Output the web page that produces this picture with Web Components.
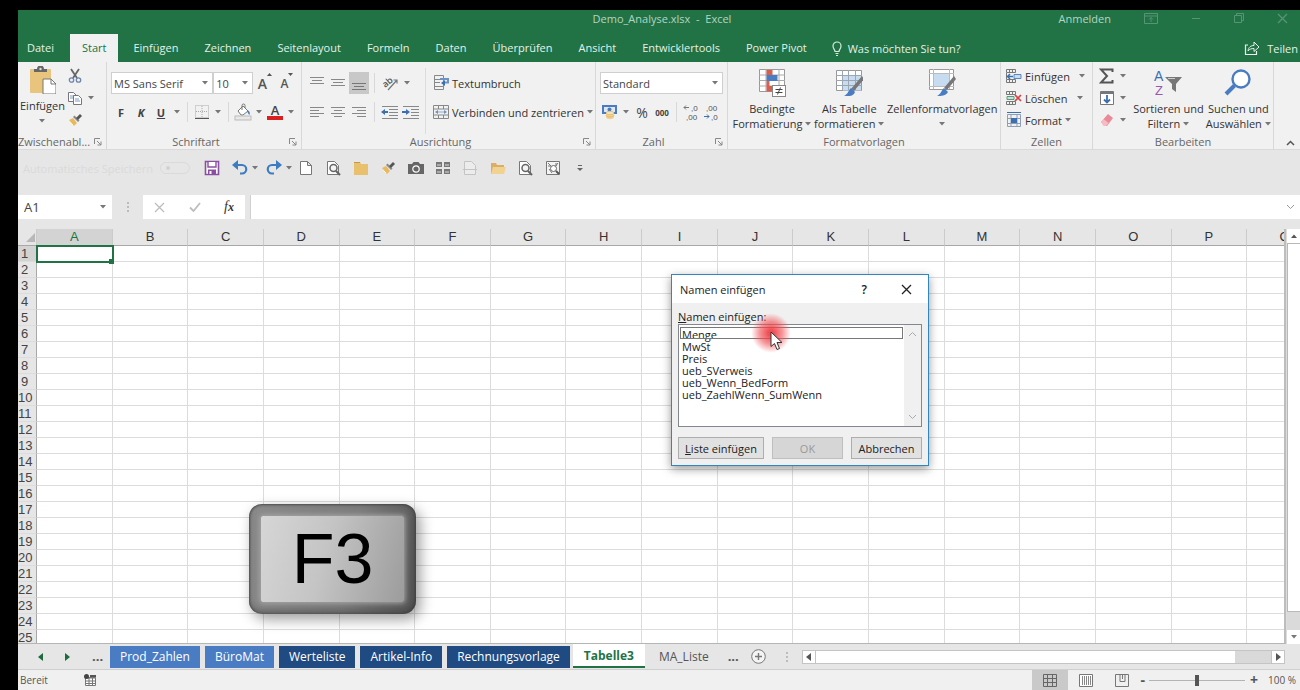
<!DOCTYPE html>
<html lang="de">
<head>
<meta charset="utf-8">
<title>Demo_Analyse.xlsx - Excel</title>
<style>
html,body{margin:0;height:100%;background:#000}
body{font:11px/15px "Open Sans","Noto Sans",sans-serif;color:#444;overflow:hidden}
</style>
</head>
<body>
<excel-app></excel-app>
<script>
const ICONS={
paste:[28,28,'<rect x="2" y="3" width="21" height="24" rx="1" fill="#e9c47c"/><path d="M6 6V3h3a3.500 3.500 0 0 1 7 0h3v3z" fill="#666"/><circle cx="12.500" cy="3" r="1.200" fill="#ddd"/><path d="M15 13h8l5 5v10H15z" fill="#fff" stroke="#777"/><path d="M23 13v5h5" fill="none" stroke="#777"/>'],
cut:[16,16,'<path d="M4 1l6 9M12 1L6 10" stroke="#666" stroke-width="1.800" fill="none"/><circle cx="4.500" cy="12" r="2.200" fill="none" stroke="#6c86ad" stroke-width="1.300"/><circle cx="11.500" cy="12" r="2.200" fill="none" stroke="#6c86ad" stroke-width="1.300"/>'],
copy:[16,16,'<path d="M1.500 2.500h5l3 3v6h-8z" fill="#fff" stroke="#777"/><path d="M3 6h4M3 8h4" stroke="#7b9bc8"/><path d="M6.500 5.500h5l3 3v6h-8z" fill="#fff" stroke="#777"/><path d="M8 9h4M8 11h5" stroke="#7b9bc8"/>'],
brush:[16,16,'<path d="M2 8l5 6 3-3-4-5z" fill="#e9b95f"/><path d="M6 5l5 5 1.500-1.500-5-5z" fill="#888"/><path d="M9 6l4-4 2 2-4 4z" fill="#555"/><path d="M3 10l3 3" stroke="#fff3d8"/>'],
triUp:[5,10,'<path d="M0 4h5L2.500 1z" fill="#555"/>'],
triDown:[5,10,'<path d="M0 1h5L2.500 4z" fill="#555"/>'],
alT:[16,16,'<path d="M1 2.500h14M3 5.500h10M1 8.500h14" stroke="#888"/>'],
alM:[16,16,'<path d="M1 4.500h14M3 7.500h10M1 10.500h14" stroke="#888"/>'],
alB:[16,16,'<path d="M1 8.500h14M3 11.500h10M1 14.500h14" stroke="#777"/>'],
left:[16,16,'<path d="M1 3.500h14M1 6.500h9M1 9.500h14M1 12.500h9" stroke="#888"/>'],
center:[16,16,'<path d="M1 3.500h14M4 6.500h8M1 9.500h14M4 12.500h8" stroke="#888"/>'],
right:[16,16,'<path d="M1 3.500h14M6 6.500h9M1 9.500h14M6 12.500h9" stroke="#888"/>'],
rotate:[18,16,'<text x="2" y="11" font-size="9" font-weight="600" fill="#555" transform="rotate(-40 6 9)" font-family="Open Sans">ab</text><path d="M7 15l9-10M16 8.500V5h-3.500" stroke="#777" fill="none" stroke-width="1.200"/>'],
outdent:[18,16,'<path d="M1 2.500h16M8 5.500h9M8 8.500h9M8 11.500h9M1 14.500h16" stroke="#888"/><path d="M7 8H3" stroke="#3c6fb0" stroke-width="2"/><path d="M4 5v6L0 8z" fill="#3c6fb0"/>'],
indent:[18,16,'<path d="M1 2.500h16M9 5.500h8M9 8.500h8M9 11.500h8M1 14.500h16" stroke="#888"/><path d="M0 8h4" stroke="#3c6fb0" stroke-width="2"/><path d="M4 5v6l4-3z" fill="#3c6fb0"/>'],
borders:[16,16,'<path d="M1.500 1.500h13v12h-13zM8 2v11M2 7.500h12" fill="none" stroke="#aaa" stroke-dasharray="1 1"/><path d="M1 14.500h14" stroke="#555"/>'],
bucket:[18,18,'<path d="M4 8l5-5 5 5-5 4H7z" fill="#fff" stroke="#777"/><path d="M8 7V2.500a1.500 1.500 0 0 1 3 0V5" fill="none" stroke="#777"/><path d="M13 7c3 1 3 3 2.500 5-1.500-1-2-3-2.500-5z" fill="#4a7cc2"/><rect x="1" y="13" width="16" height="4" fill="#e8e8e8" stroke="#bbb"/>'],
wrap:[16,16,'<path d="M1.500.500h9v14h-9zM2 4.500h8M2 7.500h5M2 11.500h8" fill="none" stroke="#888"/><path d="M7 4h8v3.500h-4" fill="none" stroke="#6d93c4" stroke-width="2"/><path d="M12 5v6L8 8z" fill="#3c6fb0"/>'],
merge:[16,16,'<path d="M.500 1.500h15v13H.500zM.500 5h15M.500 11h15M5.500 1.500V5M10.500 1.500V5M5.500 11v3.500M10.500 11v3.500" fill="none" stroke="#888"/><path d="M3 8h10" stroke="#8fa9cc"/><path d="M5 6v4L2 8zM11 6v4l3-2z" fill="#6d93c4"/>'],
currency:[18,18,'<rect x="1" y="2" width="15" height="9" fill="#4a7cc2"/><rect x="3" y="4" width="11" height="5" fill="#dce8f5"/><circle cx="8.500" cy="6.500" r="2" fill="#4a7cc2"/><path d="M5 10v4c0 3 8 3 8 0v-4z" fill="#f2d293"/><ellipse cx="9" cy="10" rx="4" ry="1.700" fill="#f8e2b4" stroke="#d9b063" stroke-width=".600"/><path d="M5 12.500c1 2 7 2 8 0" fill="none" stroke="#d9b063" stroke-width=".800"/>'],
cond:[28,30,'<path d="M1.500 1.500h25v22h-25z" fill="#fff" stroke="#999"/><path d="M1 7h26M1 12.500h26M1 18h26M8 1v22M21 1v22" stroke="#aaa"/><path d="M8.500 2h6v5h-6zM8.500 13h3v5h-3zM8.500 18h6v5.500h-6z" fill="#d5604f"/><path d="M8.500 7h11v6h-11z" fill="#4a7cc2"/><rect x="14.500" y="17.500" width="13" height="11" fill="#fff" stroke="#888"/><path d="M17.500 21.500h7M17.500 24.500h7M22.500 19.500l-3 7" stroke="#444"/>'],
table:[28,30,'<path d="M1.500 2.500h25v20h-25z" fill="#fff" stroke="#999"/><path d="M8 7.500h18v15H8z" fill="#c7dcf0"/><path d="M1 7.500h26M1 12.500h26M1 17.500h26M7.500 2v20M13.500 2v20M20.500 2v20" stroke="#9aa6b3"/><path d="M27 8l2 3-10 12-3-2z" fill="#777"/><path d="M16 20l4 4c-2 5-7 4-11 4 4-2 4-5 7-8z" fill="#4a7cc2"/>'],
style:[28,30,'<path d="M1.500 1.500h24v20h-24z" fill="#fff" stroke="#999"/><path d="M1 5.500h25M1 18.500h25M5.500 1v20M21.500 1v20" stroke="#bbb"/><rect x="6" y="6" width="15" height="12" fill="#c7dcf0"/><path d="M26 8l2 3-9 11-3-2z" fill="#777"/><path d="M16 20l4 4c-2 4-7 4-11 4 4-2 4-5 7-8z" fill="#4a7cc2"/>'],
cins:[16,16,'<path d="M.500 1.500h9v3h-9zM.500 11.500h9v3h-9zM3.500 1v3M6.500 1v3M3.500 12v3M6.500 12v3M.500 5v6" fill="none" stroke="#777"/><path d="M8 6.500h7v4H8z" fill="#c7dcf0" stroke="#5c87bd"/><path d="M7 8.500H2M4 6L1.500 8.500 4 11" stroke="#3c6fb0" fill="none" stroke-width="1.500"/>'],
cdel:[16,16,'<path d="M.500 1.500h9v3h-9zM.500 11.500h9v3h-9zM3.500 1v3M6.500 1v3M3.500 12v3M6.500 12v3" fill="none" stroke="#777"/><path d="M1 6.500h7v3H1z" fill="#c7dcf0" stroke="#5c9a6a"/><path d="M9 5l6 6M15 5l-6 6" stroke="#d8434a" stroke-width="1.700"/>'],
cfmt:[16,16,'<path d="M1.500 2.500h13v12h-13zM1 6.500h14M1 11.500h14M5 3v11M11 3v11" fill="none" stroke="#8f9fb3"/><rect x="5" y="6" width="6" height="5" fill="#3c6fb0"/><path d="M1 .500h14" stroke="#3c6fb0"/>'],
sum:[16,16,'<path d="M13.500 4V1.500H2l6 6.500-6 6.500h11.500V12" fill="none" stroke="#555" stroke-width="2"/>'],
fill:[16,16,'<path d="M1.500 1.500h13v13h-13z" fill="#fff" stroke="#777"/><path d="M1 3h14" stroke="#777" stroke-width="2"/><path d="M8 5v7M5 9.500L8 12.500l3-3" stroke="#3c6fb0" fill="none" stroke-width="1.800"/>'],
erase:[16,16,'<path d="M2 10l7-8 5 4-6 8H5z" fill="#e98a98"/><path d="M2 10l2.500-3 5 4L7 14H5z" fill="#f6bcc4"/>'],
sort:[30,30,'<text x="1" y="13" font-size="14" font-family="Liberation Sans" fill="#3c6fb0">A</text><text x="2" y="27" font-size="13" font-family="Liberation Sans" fill="#9a57b0">Z</text><path d="M12 9h17l-6 7v8l-4-3v-5z" fill="#777"/><path d="M15 10.500h7" stroke="#ccc"/>'],
find:[28,28,'<circle cx="17" cy="10" r="8.500" fill="#fff" stroke="#4a7cc2" stroke-width="2.400"/><path d="M10.500 16.500L2 25" stroke="#4a7cc2" stroke-width="4"/>'],
launch:[8,8,'<path d="M.500 6V.500H6M3 3l4 4M7 3.500V7H3.500" fill="none" stroke="#888"/>'],
up:[9,6,'<path d="M1 5l3.500-3.500L8 5" fill="none" stroke="#555" stroke-width="1.500"/>'],
drop:[6,4,'<path d="M0 0h6L3 3.500z" fill="#777"/>'],
dropUp:[6,4,'<path d="M0 4h6L3 .500z" fill="#555"/>'],
dleft:[5,8,'<path d="M5 0v8L0 4z" fill="currentColor"/>'],
dright:[5,8,'<path d="M0 0v8l5-4z" fill="currentColor"/>'],
save:[16,16,'<path d="M2 1.500h12.500v13H1.500v-13z" fill="#fff" stroke="#8a4fa3" stroke-width="1.600"/><path d="M4 2v5h8V2" fill="#fff" stroke="#8a4fa3" stroke-width="1.400"/><path d="M4 9.500h8v5H4z" fill="#8a4fa3"/><path d="M5.500 11h2v3h-2z" fill="#fff"/>'],
undo:[16,16,'<path d="M2 5h8a3.800 3.800 0 0 1 0 8.500H8" fill="none" stroke="#3c7cc0" stroke-width="2.200"/><path d="M6 0v10L0 5z" fill="#3c7cc0"/>'],
redo:[16,16,'<path d="M14 5H6a3.800 3.800 0 0 0 0 8.500h2" fill="none" stroke="#3c7cc0" stroke-width="2.200"/><path d="M10 0v10l6-5z" fill="#3c7cc0"/>'],
page:[16,16,'<path d="M2.500 1.500h7l4 4v9h-11zM9.500 1.500v4h4" fill="#fff" stroke="#777"/>'],
preview:[16,16,'<path d="M2.500 1.500h7l4 4v9h-11z" fill="#fff" stroke="#777"/><circle cx="8.500" cy="8" r="3.500" fill="#f4f4f4" stroke="#666" stroke-width="1.500"/><path d="M11 11l4 4" stroke="#666" stroke-width="2.200"/>'],
folder:[16,16,'<path d="M1 2h6l1 2h7v11H1z" fill="#e9c06c"/><path d="M1 2h6v1H1z" fill="#c59a45"/>'],
camera:[16,16,'<path d="M0 4h4l1.500-2h5L12 4h4v10H0z" fill="#666"/><circle cx="8" cy="9" r="3.200" fill="#666" stroke="#fff" stroke-width="1.200"/>'],
views:[16,16,'<path d="M1 2h6v5H1zM9 2h6v5H9zM1 9h6v5H1zM9 9h6v5H9z" fill="#777"/><path d="M2 5h4M10 5h4M2 12h4M10 12h4" stroke="#ddd"/>'],
faded:[16,16,'<path d="M2.500 1.500h7l4 4v9h-11zM1 9.500h14" fill="#ececec" stroke="#c4c4c4"/>'],
open:[16,16,'<path d="M1 3h5l1 2h7v9H1z" fill="#d9b063"/><path d="M3 7h13l-2 7H1z" fill="#f2d291"/>'],
screen:[16,16,'<path d="M1.500 1.500h13v13h-13z" fill="#f4f4f4" stroke="#777"/><path d="M3 3l5 5M4 9l3 4M13 3l-3 4M3 6h3M11 3v3" stroke="#777"/><circle cx="8.500" cy="8.500" r="3" fill="#fff" stroke="#666"/><path d="M11 11l3 3" stroke="#555" stroke-width="2"/>'],
more:[8,8,'<path d="M2 1.500h4" stroke="#666"/><path d="M1 4h6L4 7z" fill="#666"/>'],
bulb:[10,15,'<path d="M3 10.500C3 8.500 1 8 1 5a4 4 0 0 1 8 0c0 3-2 3.500-2 5.500zM3.500 12.500h3M4 14.500h2" fill="none" stroke="#d9ebdf" stroke-width="1.200"/>'],
share:[16,14,'<path d="M4 4H1.500v9.500h11V10" fill="none" stroke="#e8f3ec" stroke-width="1.200"/><path d="M4 10c.500-4 3-5.500 6-5.500V1l5 5-5 4.500V7.500C7.500 7.500 5.500 8 4 10z" fill="none" stroke="#e8f3ec"/>'],
ribbonopt:[14,11,'<path d="M.500.500h13v10H.500zM.500 3h13M7 9V4.500M5 6.500l2-2 2 2" fill="none" stroke="currentColor"/>'],
min:[10,10,'<path d="M1 5.500h8" stroke="currentColor"/>'],
restore:[10,10,'<path d="M.500 2.500h7v7h-7zM2.500 2.500v-2h7v7h-2" fill="none" stroke="currentColor"/>'],
close:[11,11,'<path d="M1 1l9 9M10 1l-9 9" fill="none" stroke="currentColor" stroke-width="1.300"/>'],
check:[12,10,'<path d="M1 5.500L4.500 9 11 1" fill="none" stroke="currentColor" stroke-width="1.800"/>'],
chevD:[9,6,'<path d="M1 1l3.500 3.500L8 1" fill="none" stroke="currentColor"/>'],
chevU:[9,6,'<path d="M1 5l3.500-3.500L8 5" fill="none" stroke="currentColor"/>'],
plus:[15,15,'<circle cx="7.500" cy="7.500" r="6.800" fill="#f4f4f4" stroke="#777"/><path d="M4 7.500h7M7.500 4v7" stroke="#777" stroke-width="1.400"/>'],
dots:[2,12,'<path d="M0 1h2v2H0zM0 5h2v2H0zM0 9h2v2H0z" fill="#bcbcbc"/>'],
corner:[9,9,'<path d="M9 0v9H0z" fill="#b8b8b8"/>'],
macro:[13,12,'<path d="M1.500 3.500h10v8h-10z" fill="#fff" stroke="#777"/><path d="M1 4h11M1 7h11M1 9.500h11M5 4v8M8.500 4v8" stroke="#777"/><circle cx="2.500" cy="2.500" r="2.500" fill="#444"/><path d="M6 1h6v2H6z" fill="#555"/>'],
vnorm:[14,13,'<path d="M.500.500h13v12H.500zM.500 4.500h13M.500 8.500h13M4.500.500v12M9.500.500v12" fill="none" stroke="#666"/>'],
vpage:[14,13,'<path d="M.500.500h13v12H.500z" fill="#fff" stroke="#777"/><path d="M3.500 2v9M5.500 2v9M7.500 2v9M9.500 2v9M11.500 2v9" stroke="#888"/>'],
vbreak:[14,13,'<path d="M.500.500h13v12H.500zM5 .500v7h5v-7M7.500 1v4" fill="none" stroke="#777"/>'],
dec1:[16,18,'<path d="M1 4.500h5M3 2.500L1 4.500l2 2" fill="none" stroke="#777"/><text x="8" y="8" font-size="8" fill="#555" font-family="Liberation Sans">,0</text><text x="3" y="17" font-size="8" fill="#555" font-family="Liberation Sans">,00</text>'],
dec2:[16,18,'<text x="3" y="8" font-size="8" fill="#555" font-family="Liberation Sans">,00</text><path d="M1 13.500h5M4 11.500l2 2-2 2" fill="none" stroke="#3c6fb0"/><text x="8" y="17" font-size="8" fill="#555" font-family="Liberation Sans">,0</text>'],
pointer:[14,20,'<path d="M1 1v14.500l3.500-3 2.500 6 2.500-1-2.500-6H12z" fill="#fff" stroke="#333"/>']
};
const define=(name,html,setup)=>{
  const t=document.createElement('template');
  t.innerHTML=`<style>*{box-sizing:border-box}button,select,input{font:inherit;color:inherit;margin:0;padding:0;border:0;background:none}button{line-height:inherit}</style>`+html;
  customElements.define(name,class extends HTMLElement{
    constructor(){super();this.attachShadow({mode:'open'}).append(t.content.cloneNode(true))}
    connectedCallback(){if(setup&&!this.done){this.done=true;setup(this,this.shadowRoot)}}
  });
};

define('x-icon','<style>:host{display:block;flex:none}svg{display:block}</style><div></div>',(h,r)=>{
  const [w,t,p]=ICONS[h.getAttribute('name')];
  r.querySelector('div').innerHTML=`<svg aria-hidden="true" width="${w}" height="${t}" viewBox="0 0 ${w} ${t}">${p}</svg>`;
});

/* Small ribbon button: a slot for text or an icon. */
define('tool-button',`<style>
:host{display:block;flex:none}
button{display:flex;align-items:center;justify-content:center;width:20px;height:22px;font-size:11px}
:host([drop]) button{width:12px}
:host([text]) button{width:auto;gap:3px;white-space:nowrap}
:host([on]) button{background:#c8c8c8}
</style><button><slot></slot></button>`,(h,r)=>{
  if(!h.hasAttribute('text'))r.querySelector('button').setAttribute('aria-label',h.getAttribute('label')||'Menü');
  if(h.hasAttribute('drop'))h.innerHTML='<x-icon name="drop"></x-icon>';
});

/* Tall ribbon button: picture above two lines of caption. */
define('ribbon-big',`<style>
:host{display:block;flex:none}
button{display:flex;flex-direction:column;align-items:center;height:68px;line-height:15px;white-space:nowrap;color:#333}
.pic{height:36px;display:flex;align-items:center}
.b{display:flex;align-items:center;gap:3px;height:15px}
</style><button><span class="pic"><slot name="icon"></slot></span><span><slot></slot></span><span class="b"><slot name="second"></slot><x-icon name="drop"></x-icon></span></button>`);

define('ribbon-group',`<style>
:host{display:flex;flex-direction:column;border-right:1px solid #d8d8d8;min-width:0}
.body{flex:1;min-height:0}
.foot{display:grid;grid-template-columns:1fr auto 1fr;align-items:center;height:17px;padding-bottom:2px;color:#666;white-space:nowrap}
:host([launch]) .foot{grid-template-columns:1fr auto 1fr 16px}
.foot x-icon{grid-column:4;justify-self:start;margin-left:4px}
:host([start]) .foot{grid-template-columns:0 auto 1fr 16px}
.t{grid-column:2}
</style><div class="body"><slot></slot></div><div class="foot"><span class="t"></span></div>`,(h,r)=>{
  r.querySelector('.t').textContent=h.getAttribute('label');
  if(h.hasAttribute('launch'))r.querySelector('.foot').insertAdjacentHTML('beforeend','<x-icon name="launch"></x-icon>');
});

define('combo-box',`<style>
:host{display:block;height:22px}
label{display:grid;height:22px;background:#fff;border:1px solid #cfcfcf;align-items:center}
select,x-icon{grid-area:1/1}
select{appearance:none;width:100%;height:20px;padding-left:2px;color:#444}
x-icon{justify-self:end;margin-right:4px;pointer-events:none}
</style><label><select><option></option></select><x-icon name="drop"></x-icon></label>`,(h,r)=>{
  r.querySelector('option').textContent=h.getAttribute('value');
  r.querySelector('select').setAttribute('aria-label',h.getAttribute('label'));
});

define('title-bar',`<style>
:host{display:grid;grid-template-columns:1fr auto 1fr;align-items:center;height:24px;padding:0 12px 8px 18px;color:#b5d3c1;background:#217346}
.r{display:flex;justify-content:flex-end;align-items:center;gap:33px;grid-column:3;color:#579474}
a{color:#b5d3c1;text-decoration:none}.t{grid-column:2;white-space:pre}
button{display:block}
</style><span class="t">Demo_Analyse.xlsx  -  Excel</span>
<div class="r"><a href="#">Anmelden</a><button aria-label="Menübandoptionen"><x-icon name="ribbonopt"></x-icon></button><button aria-label="Minimieren"><x-icon name="min"></x-icon></button><button aria-label="Verkleinern"><x-icon name="restore"></x-icon></button><button aria-label="Schließen"><x-icon name="close"></x-icon></button></div>`);

define('ribbon-tabs',`<style>
:host{display:flex;align-items:stretch;height:28px;background:#217346;color:#e4f1e9}
a{color:inherit;text-decoration:none;padding:0 13px;line-height:28px;white-space:nowrap}
a:first-of-type{padding:0 16px 0 9px}
a.on{background:#f1f1f1;color:#217346;padding:0 12px;margin-right:2px}
.ask,.share{display:flex;align-items:center;gap:6px;white-space:nowrap}
.ask{margin-left:12px}.share{margin-left:auto;padding-right:2px;gap:7px}
</style><a href="#">Datei</a><a href="#" class="on">Start</a><a href="#">Einfügen</a><a href="#">Zeichnen</a><a href="#">Seitenlayout</a><a href="#">Formeln</a><a href="#">Daten</a><a href="#">Überprüfen</a><a href="#">Ansicht</a><a href="#">Entwicklertools</a><a href="#">Power Pivot</a><button class="ask"><x-icon name="bulb"></x-icon>Was möchten Sie tun?</button><button class="share"><x-icon name="share"></x-icon>Teilen</button>`);

define('ribbon-bar',`<style>
:host{display:grid;grid-template-columns:89fr 195fr 294fr 132fr 273fr 92fr 181fr 26fr;height:88px;background:#f1f1f1;border-bottom:1px solid #dadada}
.row{display:flex;align-items:center;height:22px}
.rows{display:flex;flex-direction:column;gap:7px;padding:10px 4px 0}
.al{padding-left:5px}.al .row{gap:1px}
.stack{display:flex;flex-direction:column;padding-top:3px}
.flex{display:flex}
.bigs{display:flex;justify-content:space-evenly;padding:3px 0 0 2px}
.sep{flex:none;width:1px;height:20px;margin:0 4px;background:#d8d8d8}
.vsep{flex:none;width:1px;height:66px;margin-top:6px;background:#dcdcdc}
.dark{color:#333}
.col{display:flex;flex-direction:column;gap:7px;padding:10px 0 0 7px}
b{color:#444}.A{border-bottom:4px solid #d8201f;line-height:12px;font-size:13px;font-weight:600;padding:0 4px}
.f1{font-size:14px;font-weight:600;color:#555}.f2{font-size:12px;font-weight:600;color:#555}
.pct{font-size:14px}.th{font-size:8px}
.gr{margin-left:2px}
.raise{align-self:flex-start}
.end{display:flex;align-items:flex-end;justify-content:center;padding:0 0 5px 6px}
.clip{padding-left:2px}.cells{padding-left:5px}.edit{padding-left:4px}
.gap{width:6px}.wide{flex:1}.font{width:105px}.size{width:41px}
</style>
<ribbon-group label="Zwischenabl..." launch start><div class="flex clip">
 <ribbon-big><x-icon slot="icon" name="paste"></x-icon>Einfügen</ribbon-big>
 <div class="stack">
  <div class="row"><tool-button label="Ausschneiden"><x-icon name="cut"></x-icon></tool-button></div>
  <div class="row"><tool-button label="Kopieren"><x-icon name="copy"></x-icon></tool-button><tool-button drop></tool-button></div>
  <div class="row"><tool-button label="Format übertragen"><x-icon name="brush"></x-icon></tool-button></div></div></div>
</ribbon-group>
<ribbon-group label="Schriftart" launch><div class="rows">
 <div class="row"><combo-box class="font" label="Schriftart" value="MS Sans Serif"></combo-box><combo-box class="size" label="Schriftgrad" value="10"></combo-box>
  <tool-button class="gr" label="Schrift vergrößern"><span class="f1">A</span><x-icon class="raise" name="triUp"></x-icon></tool-button><tool-button class="gr" label="Schrift verkleinern"><span class="f2">A</span><x-icon class="raise" name="triDown"></x-icon></tool-button></div>
 <div class="row"><tool-button label="Fett"><b>F</b></tool-button><tool-button label="Kursiv"><b><i>K</i></b></tool-button><tool-button label="Unterstrichen"><b><u>U</u></b></tool-button><tool-button drop></tool-button><span class="sep"></span>
  <tool-button label="Rahmen"><x-icon name="borders"></x-icon></tool-button><tool-button drop></tool-button><span class="sep"></span>
  <tool-button label="Füllfarbe"><x-icon name="bucket"></x-icon></tool-button><tool-button drop></tool-button><tool-button label="Schriftfarbe"><span class="A">A</span></tool-button><tool-button drop></tool-button></div></div>
</ribbon-group>
<ribbon-group label="Ausrichtung" launch><div class="flex">
 <div class="rows al"><div class="row"><tool-button label="Oben"><x-icon name="alT"></x-icon></tool-button><tool-button label="Mitte"><x-icon name="alM"></x-icon></tool-button><tool-button on label="Unten"><x-icon name="alB"></x-icon></tool-button><span class="sep"></span><tool-button label="Ausrichtung"><x-icon name="rotate"></x-icon></tool-button><tool-button drop></tool-button></div>
 <div class="row"><tool-button label="Linksbündig"><x-icon name="left"></x-icon></tool-button><tool-button label="Zentriert"><x-icon name="center"></x-icon></tool-button><tool-button label="Rechtsbündig"><x-icon name="right"></x-icon></tool-button><span class="sep"></span><tool-button label="Einzug verkleinern"><x-icon name="outdent"></x-icon></tool-button><tool-button label="Einzug vergrößern"><x-icon name="indent"></x-icon></tool-button></div></div>
 <span class="vsep"></span>
 <div class="col dark"><div class="row"><tool-button text><x-icon name="wrap"></x-icon>Textumbruch</tool-button></div>
 <div class="row"><tool-button text><x-icon name="merge"></x-icon>Verbinden und zentrieren</tool-button><tool-button drop></tool-button></div></div></div>
</ribbon-group>
<ribbon-group label="Zahl" launch><div class="rows">
 <div class="row"><combo-box class="wide" label="Zahlenformat" value="Standard"></combo-box></div>
 <div class="row"><tool-button label="Währung"><x-icon name="currency"></x-icon></tool-button><tool-button drop></tool-button><tool-button label="Prozent"><span class="pct">%</span></tool-button><tool-button label="Tausender"><b class="th">000</b></tool-button><span class="sep"></span><tool-button label="Mehr Stellen"><x-icon name="dec1"></x-icon></tool-button><tool-button label="Weniger Stellen"><x-icon name="dec2"></x-icon></tool-button></div></div>
</ribbon-group>
<ribbon-group label="Formatvorlagen"><div class="bigs">
 <ribbon-big><x-icon slot="icon" name="cond"></x-icon>Bedingte<span slot="second">Formatierung</span></ribbon-big>
 <ribbon-big><x-icon slot="icon" name="table"></x-icon>Als Tabelle<span slot="second">formatieren</span></ribbon-big>
 <ribbon-big><x-icon slot="icon" name="style"></x-icon>Zellenformatvorlagen</ribbon-big></div>
</ribbon-group>
<ribbon-group label="Zellen"><div class="stack dark cells">
 <div class="row"><tool-button text><x-icon name="cins"></x-icon>Einfügen</tool-button><span class="gap"></span><tool-button drop></tool-button></div>
 <div class="row"><tool-button text><x-icon name="cdel"></x-icon>Löschen</tool-button><span class="gap"></span><tool-button drop></tool-button></div>
 <div class="row"><tool-button text><x-icon name="cfmt"></x-icon>Format</tool-button><tool-button drop></tool-button></div></div>
</ribbon-group>
<ribbon-group label="Bearbeiten"><div class="flex edit">
 <div class="stack"><div class="row"><tool-button label="Summe"><x-icon name="sum"></x-icon></tool-button><tool-button drop></tool-button></div>
 <div class="row"><tool-button label="Füllbereich"><x-icon name="fill"></x-icon></tool-button><tool-button drop></tool-button></div>
 <div class="row"><tool-button label="Löschen"><x-icon name="erase"></x-icon></tool-button><tool-button drop></tool-button></div></div>
 <div class="bigs wide"><ribbon-big><x-icon slot="icon" name="sort"></x-icon>Sortieren und<span slot="second">Filtern</span></ribbon-big>
 <ribbon-big><x-icon slot="icon" name="find"></x-icon>Suchen und<span slot="second">Auswählen</span></ribbon-big></div></div>
</ribbon-group>
<div class="end"><button aria-label="Menüband reduzieren"><x-icon name="up"></x-icon></button></div>`);

define('quick-access',`<style>
:host{display:flex;align-items:center;height:36px;padding-left:5px;color:#dadada;background:#e6e6e6}
.auto{width:130px;white-space:nowrap}
.sw{width:30px;height:12px;margin:0 14px 0 7px;border:1px solid #dadada;border-radius:6px;display:block;padding:3px 5px}
.sw::before{content:"";display:block;width:4px;height:4px;border-radius:2px;background:#d2d2d2}
button{display:flex;align-items:center;justify-content:center;width:16px;height:20px}
.d{width:12px;margin:0 3px 0 1px}
.g{width:12px}.h{width:2px}
.set{display:flex;justify-content:space-between;width:290px}
</style><span class="auto">Automatisches Speichern</span><span class="sw"></span>
<button aria-label="Speichern"><x-icon name="save"></x-icon></button><span class="g"></span>
<button aria-label="Rückgängig"><x-icon name="undo"></x-icon></button><button class="d" aria-label="Mehr"><x-icon name="drop"></x-icon></button><span class="h"></span>
<button aria-label="Wiederholen"><x-icon name="redo"></x-icon></button><button class="d" aria-label="Mehr"><x-icon name="drop"></x-icon></button>
<span class="set"></span>`,(h,r)=>{
  r.querySelector('.set').innerHTML='page preview folder brush camera views faded open preview screen more'.split(' ').map(n=>`<button aria-label="${n}"><x-icon name="${n}"></x-icon></button>`).join('');
});

define('formula-bar',`<style>
:host{display:flex;align-items:stretch;height:43px;padding:9px 0 10px;background:#e6e6e6;color:#444}
.name{width:94px;display:flex;align-items:center;background:#fff;padding:0 6px}
.name input{width:76px;font-size:13px}
.dots{width:31px;display:flex;align-items:center;justify-content:center}
.btns{display:flex;align-items:center;width:102px;justify-content:space-between;padding:0 11px;background:#fff;color:#bdbdbd;margin-right:5px}
.fx{font:italic 14px/20px "Liberation Serif",serif;color:#333}
.fx span{font-size:12px;font-weight:700}
.f{flex:1;display:flex;align-items:center;background:#fff;border-left:1px solid #d0d0d0;padding-right:5px;color:#999}
.f input{flex:1;height:20px;outline:0}
</style><div class="name"><input aria-label="Namenfeld" value="A1"><x-icon name="drop"></x-icon></div><span class="dots"><x-icon name="dots"></x-icon></span>
<div class="btns"><button aria-label="Abbrechen"><x-icon name="close"></x-icon></button><button aria-label="Eingeben"><x-icon name="check"></x-icon></button><button class="fx" aria-label="Funktion einfügen">f<span>x</span></button></div>
<div class="f"><input aria-label="Formel"><button aria-label="Erweitern"><x-icon name="chevD"></x-icon></button></div>`);

define('sheet-grid',`<style>
:host{display:flex;min-height:0;background:#e6e6e6;font-family:"Liberation Sans",Arial,sans-serif;font-size:13px}
.view{flex:1;min-width:0;overflow:hidden;border-right:2px solid #bdbdbd;border-bottom:1px solid #b5b5b5;background:#fff}
table{width:calc(100% + 39px);table-layout:fixed;border-collapse:separate;border-spacing:0}
col:first-child{width:19px}
th,td{height:16px;padding:0;line-height:15px;font-weight:400;border-right:1px solid #dcdcdc;border-bottom:1px solid #dcdcdc;overflow:hidden}
thead th{height:17px;line-height:16px;background:#e6e6e6;border-right-color:#cbcbcb;border-bottom-color:#a8a8a8;color:#333}
thead th.on{background:#d3d3d3;color:#217346}
tbody th{background:#e6e6e6;color:#444;text-align:center;padding-right:5px;white-space:nowrap;border-right-color:#a8a8a8}
tbody tr:first-child th{background:#d3d3d3}
thead x-icon{margin-left:8px}
td.sel{outline:2px solid #217346;outline-offset:-1px;overflow:visible}
.knob{display:flex;justify-content:flex-end;align-items:flex-end;height:15px}
.knob::after{content:"";width:5px;height:5px;background:#217346;margin:0 -2px -3px 0;border:1px solid #fff;border-width:1px 0 0 1px;box-sizing:content-box}
.bar{width:14px;display:flex;flex-direction:column;background:#dadada;border-left:1px solid #ddd}
.bar button{height:14px;background:#fff;display:flex;align-items:center;justify-content:center}
.thumb{flex:1;background:#fff;border:solid #b8b8b8;border-width:1px 0 1px 1px;margin-bottom:18px}
</style><div class="view"><table aria-label="Tabelle3"><colgroup></colgroup><thead><tr></tr></thead><tbody></tbody></table></div>
<div class="bar"><button aria-label="Nach oben"><x-icon name="dropUp"></x-icon></button><div class="thumb"></div><button aria-label="Nach unten"><x-icon name="drop"></x-icon></button></div>`,(h,r)=>{
  const L=[...'ABCDEFGHIJKLMNOPQ'];
  r.querySelector('colgroup').innerHTML='<col>'.repeat(18);
  r.querySelector('thead tr').innerHTML='<th><x-icon name="corner"></x-icon></th>'+L.map(c=>`<th scope="col"${c=='A'?' class="on"':''}>${c}</th>`).join('');
  r.querySelector('tbody').innerHTML=Array.from({length:25},(_,i)=>`<tr><th scope="row">${i+1}</th>`+L.map((c,j)=>i+j?'<td></td>':'<td class="sel"><div class="knob"></div></td>').join('')+'</tr>').join('');
});

define('sheet-tabs',`<style>
:host{display:flex;align-items:center;height:26px;background:#e6e6e6;border-bottom:1px solid #cfcfcf;font-size:12px;color:#555}
button{height:22px;white-space:nowrap}
.nav{display:flex;align-items:center;gap:22px;padding-left:20px;width:92px;color:#1c6b3f;font-weight:700}
.nav button{display:flex;align-items:center}
.nav span{color:#555;font-size:13px}
.t{padding:0 10px;margin-right:5px;color:#fff}
.l{background:#4a7cc4}.d{background:#204a82}
.on{background:#fff;color:#217346;font-weight:700;border-bottom:2px solid #217346;padding:0 11px;height:24px;align-self:flex-start;margin-left:-2px}
.n{padding:0 14px}
.m{font-weight:700;font-size:13px;padding:0 12px 0 5px}
.g{width:20px}
.s{flex:1;display:flex;align-items:center;margin-left:14px;padding-right:15px}
.track{flex:1;height:14px;background:#d9d9d9;display:flex;border:solid #c4c4c4;border-width:1px 0}
.thumb{width:92%;background:#fff}
.s button{width:14px;height:14px;border:1px solid #c4c4c4;background:#fff;display:flex;align-items:center;justify-content:center}
</style><div class="nav"><button aria-label="Zurück"><x-icon name="dleft"></x-icon></button><button aria-label="Weiter"><x-icon name="dright"></x-icon></button><span>...</span></div>
<button class="t l">Prod_Zahlen</button><button class="t l">BüroMat</button><button class="t d">Werteliste</button><button class="t d">Artikel-Info</button><button class="t d">Rechnungsvorlage</button><button class="on">Tabelle3</button><button class="n">MA_Liste</button><span class="m">...</span><button aria-label="Neues Blatt"><x-icon name="plus"></x-icon></button><span class="g"></span><x-icon name="dots"></x-icon>
<div class="s"><button aria-label="Nach links"><x-icon name="dleft"></x-icon></button><div class="track"><div class="thumb"></div></div><button aria-label="Nach rechts"><x-icon name="dright"></x-icon></button></div>`);

define('status-bar',`<style>
:host{display:flex;align-items:center;height:20px;background:#f0f0f0;padding:0 4px 0 2px;font-size:10px;color:#555}
.v{margin-left:auto;display:flex;align-self:stretch}
.v button{width:36px;display:flex;align-items:center;justify-content:center}
.v .on{background:#c9c9c9}
input{appearance:none;width:96px;height:16px;margin:0 5px 0 4px;background:linear-gradient(#b4b4b4,#b4b4b4) 0 50%/100% 1px no-repeat}
input::-webkit-slider-thumb{appearance:none;width:4px;height:11px;background:#555}
.z{font-size:14px;font-weight:700;line-height:16px}
.p{width:38px;text-align:right;white-space:nowrap}
x-icon.m{margin-left:36px}
</style><span>Bereit</span><x-icon class="m" name="macro"></x-icon>
<div class="v"><button class="on" aria-label="Normal"><x-icon name="vnorm"></x-icon></button><button aria-label="Seitenlayout"><x-icon name="vpage"></x-icon></button><button aria-label="Umbruchvorschau"><x-icon name="vbreak"></x-icon></button></div>
<button class="z" aria-label="Verkleinern">-</button><input type="range" aria-label="Zoom" min="0" max="200" value="100"><button class="z" aria-label="Vergrößern">+</button><span class="p">100 %</span>`);

define('names-dialog',`<style>
:host{display:block;background:#f0f0f0;border:1px solid #2f86c0;box-shadow:0 3px 9px rgba(0,0,0,.4);color:#222}
header{display:flex;align-items:center;height:28px;padding:0 16px 0 8px;background:#fff}
header span{flex:1}
header button{display:block;font-size:12px;font-weight:600}
header button+button{margin-left:34px}
.body{padding:6px}
label{display:block;height:15px}
.list{display:flex;height:103px;margin:0 0 10px;border:1px solid #828790;background:#fff}
select{appearance:none;flex:1;min-width:0;height:100%;padding:2px 1px;overflow:hidden;outline:0}
option{height:12px;min-height:12px;line-height:10px;padding:0 2px;overflow:visible}
option:first-child{outline:1px solid #777;outline-offset:-1px}
.sc{width:17px;display:flex;flex-direction:column;justify-content:space-between;align-items:center;padding:6px 0;background:#f0f0f0;color:#aaa}
.btns{display:flex;justify-content:space-between}
.btns button{height:22px;width:71px;background:#e1e1e1;border:1px solid #adadad;white-space:nowrap}
.btns button:first-child{width:86px}
.btns button:disabled{color:#999;background:#d6d6d6;border-color:#bfbfbf}
</style><header><span>Namen einfügen</span><button aria-label="Hilfe">?</button><button aria-label="Schließen"><x-icon name="close"></x-icon></button></header>
<div class="body"><label for="l"><u>N</u>amen einfügen:</label>
<div class="list"><select id="l" size="8"><option>Menge</option><option>MwSt</option><option>Preis</option><option>ueb_SVerweis</option><option>ueb_Wenn_BedForm</option><option>ueb_ZaehlWenn_SumWenn</option></select><span class="sc"><x-icon name="chevU"></x-icon><x-icon name="chevD"></x-icon></span></div>
<div class="btns"><button><u>L</u>iste einfügen</button><button disabled>OK</button><button>Abbrechen</button></div></div>`);

define('key-cap',`<style>
:host{display:block;padding:12px;border-radius:13px;background:linear-gradient(100deg,#8c8c8c,#7c7c7c 60%,#565656);box-shadow:inset 0 1px 2px rgba(60,60,60,.5),inset 0 -4px 7px rgba(50,50,50,.35),inset 1px 0 2px rgba(60,60,60,.5),inset -2px 0 4px rgba(50,50,50,.3),4px 5px 14px rgba(0,0,0,.4)}
div{height:100%;display:flex;align-items:center;justify-content:center;border-radius:2px;background:linear-gradient(105deg,#d6d6d6,#c4c4c4 45%,#9c9c9c);box-shadow:0 0 5px 1px #a8a8a8;color:#000;font:70px/80px "Liberation Sans",Arial,sans-serif}
</style><div><slot></slot></div>`);

define('click-mark',`<style>
:host{display:grid;pointer-events:none}
.g,x-icon{grid-area:1/1}
.g{width:40px;height:40px;border-radius:50%;background:radial-gradient(rgba(238,60,65,.9) 0 10%,rgba(240,80,85,.6) 40%,rgba(240,80,85,0) 70%)}
x-icon{margin:18px 0 0 19px}
</style><div class="g"></div><x-icon name="pointer"></x-icon>`);

define('excel-app',`<style>
:host{display:flex;flex-direction:column;height:100vh;box-sizing:border-box;padding:10px 0 0 18px;position:relative;overflow:hidden}
sheet-grid{flex:1}
names-dialog{position:absolute;left:671px;top:274px;width:258px}
key-cap{position:absolute;left:249px;top:504px;width:167px;height:110px;box-sizing:border-box}
click-mark{position:absolute;left:751px;top:313px}
title-bar,ribbon-tabs,ribbon-bar,quick-access,formula-bar,sheet-tabs,status-bar{flex:none;box-sizing:border-box}
</style><title-bar></title-bar><ribbon-tabs></ribbon-tabs><ribbon-bar></ribbon-bar><quick-access></quick-access><formula-bar></formula-bar><sheet-grid></sheet-grid><sheet-tabs></sheet-tabs><status-bar></status-bar>
<key-cap>F3</key-cap><names-dialog></names-dialog><click-mark></click-mark>`);
</script>
</body>
</html>
